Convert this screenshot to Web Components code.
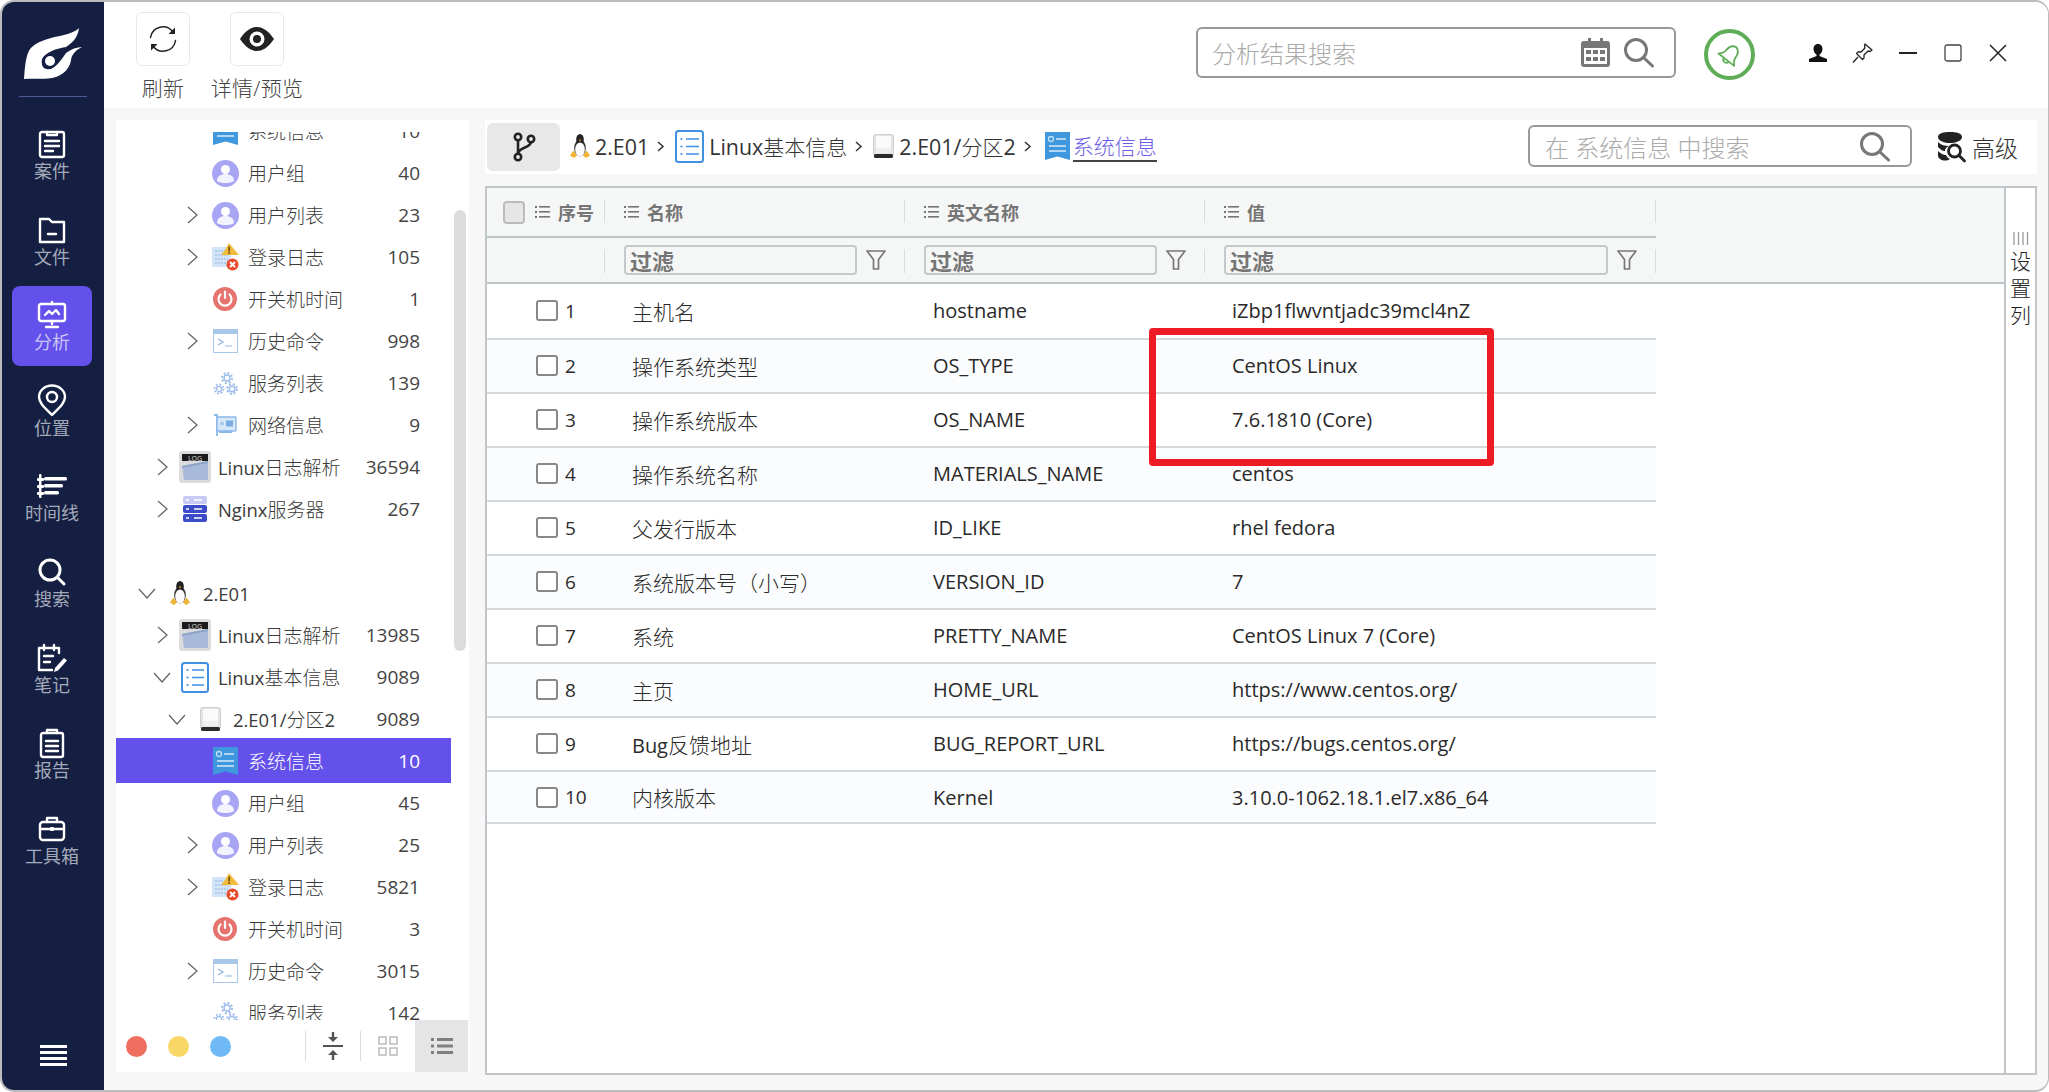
<!DOCTYPE html>
<html lang="zh"><head><meta charset="utf-8"><title>分析</title>
<style>
html,body{margin:0;padding:0;background:#fff;overflow:hidden}
body{font-family:"Open Sans","Noto Sans CJK SC",sans-serif;font-weight:300;color:#333}
</style></head><body>
<app-window>
  <side-nav slot="nav">
    <nav-item icon="case">案件</nav-item>
    <nav-item icon="file">文件</nav-item>
    <nav-item icon="analysis" active>分析</nav-item>
    <nav-item icon="pin">位置</nav-item>
    <nav-item icon="timeline">时间线</nav-item>
    <nav-item icon="search">搜索</nav-item>
    <nav-item icon="note">笔记</nav-item>
    <nav-item icon="report">报告</nav-item>
    <nav-item icon="toolbox">工具箱</nav-item>
  </side-nav>
  <top-bar slot="top">
    <tool-btn icon="refresh">刷新</tool-btn>
    <tool-btn icon="eye">详情/预览</tool-btn>
  </top-bar>
  <tree-panel slot="tree">
    <tree-row level="3" icon="doc" count="10">系统信息</tree-row>
    <tree-row level="3" icon="user" count="40">用户组</tree-row>
    <tree-row level="3" icon="user" chev="right" count="23">用户列表</tree-row>
    <tree-row level="3" icon="log" chev="right" count="105">登录日志</tree-row>
    <tree-row level="3" icon="power" count="1">开关机时间</tree-row>
    <tree-row level="3" icon="term" chev="right" count="998">历史命令</tree-row>
    <tree-row level="3" icon="gear" count="139">服务列表</tree-row>
    <tree-row level="3" icon="net" chev="right" count="9">网络信息</tree-row>
    <tree-row level="1" icon="logfile" chev="right" count="36594"><la-t>Linux</la-t>日志解析</tree-row>
    <tree-row level="1" icon="nginx" chev="right" count="267"><la-t>Nginx</la-t>服务器</tree-row>
    <tree-row level="0" blank></tree-row>
    <tree-row level="0" icon="tux" chev="down"><la-t>2.E01</la-t></tree-row>
    <tree-row level="1" icon="logfile" chev="right" count="13985"><la-t>Linux</la-t>日志解析</tree-row>
    <tree-row level="1" icon="list" chev="down" count="9089"><la-t>Linux</la-t>基本信息</tree-row>
    <tree-row level="2" icon="disk" chev="down" count="9089"><la-t>2.E01/</la-t>分区<la-t>2</la-t></tree-row>
    <tree-row level="3" icon="doc" count="10" selected>系统信息</tree-row>
    <tree-row level="3" icon="user" count="45">用户组</tree-row>
    <tree-row level="3" icon="user" chev="right" count="25">用户列表</tree-row>
    <tree-row level="3" icon="log" chev="right" count="5821">登录日志</tree-row>
    <tree-row level="3" icon="power" count="3">开关机时间</tree-row>
    <tree-row level="3" icon="term" chev="right" count="3015">历史命令</tree-row>
    <tree-row level="3" icon="gear" count="142">服务列表</tree-row>
  </tree-panel>
  <crumb-bar slot="crumbs">
    <crumb-item icon="tux" after="11"><la-t>2.E01</la-t></crumb-item>
    <crumb-item icon="listbig" after="11"><la-t>Linux</la-t>基本信息</crumb-item>
    <crumb-item icon="disk" after="14"><la-t>2.E01/</la-t>分区<la-t>2</la-t></crumb-item>
    <crumb-item icon="doc" current>系统信息</crumb-item>
  </crumb-bar>
  <data-grid slot="grid">
    <grid-row n="1" name="主机名" en="hostname" val="iZbp1flwvntjadc39mcl4nZ"></grid-row>
    <grid-row n="2" name="操作系统类型" en="OS_TYPE" val="CentOS Linux"></grid-row>
    <grid-row n="3" name="操作系统版本" en="OS_NAME" val="7.6.1810 (Core)"></grid-row>
    <grid-row n="4" name="操作系统名称" en="MATERIALS_NAME" val="centos"></grid-row>
    <grid-row n="5" name="父发行版本" en="ID_LIKE" val="rhel fedora"></grid-row>
    <grid-row n="6" name="系统版本号（小写）" en="VERSION_ID" val="7"></grid-row>
    <grid-row n="7" name="系统" en="PRETTY_NAME" val="CentOS Linux 7 (Core)"></grid-row>
    <grid-row n="8" name="主页" en="HOME_URL" val="https://www.centos.org/"></grid-row>
    <grid-row n="9" name="Bug反馈地址" en="BUG_REPORT_URL" val="https://bugs.centos.org/"></grid-row>
    <grid-row n="10" name="内核版本" en="Kernel" val="3.10.0-1062.18.1.el7.x86_64"></grid-row>
  </data-grid>
</app-window>
<script>
const W='fill="none" stroke="#fff" stroke-width="2.4" stroke-linecap="round" stroke-linejoin="round"';
const ICONS={
 logo:[58,51,'<path fill="#fff" fill-rule="evenodd" d="M0 51C1 37 2 27 6 21C12 14 24 10 36 8C44 6 51 4 55 0C54 8 50 14 42 19C31 21 22 24 18 31C17 37 19 41 23 41C29 43 36 34 42 25C47 21 53 19 58 19C52 22 48 26 47 32C46 40 40 46 32 49C22 52 10 50 0 51Z"/><circle cx="26" cy="33" r="5" fill="#fff"/>'],
 case:[28,30,`<g ${W}><rect x="2" y="3" width="24" height="25" rx="2"/><path d="M9 3v3h10V3M7 12h14M7 17h14M7 22h8"/></g>`],
 file:[28,28,`<g ${W}><path d="M2 3h9l3 3h12v20H2z"/><path d="M10 18h8"/></g>`],
 analysis:[30,28,`<g ${W}><rect x="2" y="3" width="26" height="17" rx="2"/><path d="M8 14l4-4 3 3 4-4 3 4M15 20v3M9 26h12M15 1v2"/></g>`],
 pin:[30,32,`<g ${W}><path d="M15 30C8 23 2 18 2 12A13 11.500 0 0 1 28 12C28 18 22 23 15 30Z"/><circle cx="15" cy="12" r="5"/></g>`],
 timeline:[30,24,'<g fill="#fff"><rect x="2" y="0" width="2.500" height="24" rx="1"/><rect x="0" y="4" width="7" height="3" rx="1"/><rect x="0" y="11" width="7" height="3" rx="1"/><rect x="0" y="18" width="7" height="3" rx="1"/><rect x="7" y="3" width="23" height="3.500" rx="1.500"/><rect x="7" y="10" width="19" height="3.500" rx="1.500"/><rect x="7" y="17" width="15" height="3.500" rx="1.500"/></g>'],
 search:[28,28,`<g fill="none" stroke="#fff" stroke-width="3" stroke-linecap="round"><circle cx="12" cy="12" r="10"/><path d="M19.500 19.500L26 26"/></g>`],
 note:[30,28,`<g ${W}><path d="M22 9V4H2v22h13M7 1v5M17 1v5M7 12h9M7 18h6"/></g><path fill="#fff" d="M18 24l9-10 3 2.500-9 10-4 1.500z"/>`],
 report:[26,30,`<g ${W}><rect x="2" y="5" width="22" height="24" rx="2"/><path d="M8 5V2h10v3M7 13h12M7 18h12M7 23h12"/></g>`],
 toolbox:[28,26,`<g ${W}><rect x="2" y="6" width="24" height="18" rx="3"/><path d="M9 6V2h10v4M2 13h24"/></g><rect x="12" y="11" width="4" height="4" rx="1" fill="#fff"/>`],
 menu:[27,21,'<g fill="#fff"><rect width="27" height="3"/><rect y="6" width="27" height="3"/><rect y="12" width="27" height="3"/><rect y="18" width="27" height="3"/></g>'],
 refresh:[28,28,'<g fill="none" stroke="#222" stroke-width="1.500" stroke-linecap="round"><path d="M1.500 12.500A12.500 12.500 0 0 1 24 7M26.500 15.500A12.500 12.500 0 0 1 4 21"/></g><path fill="#222" d="M26 2.500v6.500h-6.500zM2 25.500v-6.500h6.500z"/>'],
 eye:[34,24,'<path fill="#222" fill-rule="evenodd" d="M0 12C6 3 12 0 17 0S28 3 34 12C28 21 22 24 17 24S6 21 0 12ZM17 4.500A7.500 7.500 0 1 0 17 19.500A7.500 7.500 0 1 0 17 4.500Z"/><circle cx="17" cy="12" r="4" fill="#222"/>'],
 calendar:[29,29,'<path fill="#777" fill-rule="evenodd" d="M3 3h4V0h3v3h9V0h3v3h4a3 3 0 0 1 3 3v20a3 3 0 0 1-3 3H3a3 3 0 0 1-3-3V6a3 3 0 0 1 3-3ZM3 10v16h23V10Z"/><g fill="#777"><rect x="5" y="12" width="5" height="4"/><rect x="12" y="12" width="5" height="4"/><rect x="19" y="12" width="5" height="4"/><rect x="5" y="19" width="5" height="4"/><rect x="12" y="19" width="5" height="4"/><rect x="19" y="19" width="5" height="4"/></g>'],
 mag:[30,29,'<g fill="none" stroke="#777" stroke-width="3" stroke-linecap="round"><circle cx="12" cy="12" r="10.500"/><path d="M20 20l8.500 8"/></g>'],
 bell:[26,24,'<g transform="rotate(38 13 12)"><path fill="none" stroke="#5fad56" stroke-width="1.800" stroke-linejoin="round" d="M13 2C8 3 7 7 7 11C7 14 5 16 3 18H23C21 16 19 14 19 11C19 7 18 3 13 2ZM10 18C10 22 16 22 16 18"/></g>'],
 person:[18,18,'<path fill="#111" d="M9 0C12 0 13.500 2.500 13.500 5S12 10 10.500 10.500V12L18 15V18H0V15L7.500 12V10.500C6 10 4.500 7.500 4.500 5S6 0 9 0Z"/>'],
 thumb:[21,20,'<g fill="#fff" stroke="#222" stroke-width="1.300" stroke-linejoin="round"><path d="M13 1l7 6-2 1.500-2-.5-4 4 0 3-1.500 1.500-6-6L6 9l3 0 4-4-.5-2z"/></g><path stroke="#222" stroke-width="1.300" d="M6 14l-5 5.500"/>'],
 min:[18,18,'<rect y="8" width="18" height="2" fill="#222"/>'],
 max:[18,18,'<rect x="1" y="1" width="16" height="16" rx="2" fill="none" stroke="#444" stroke-width="1.300"/>'],
 close:[18,18,'<path d="M1 1l16 16M17 1L1 17" stroke="#222" stroke-width="1.500"/>'],
 branch:[22,30,'<g fill="none" stroke="#222" stroke-width="2.600"><circle cx="5" cy="5" r="3.200"/><circle cx="5" cy="25" r="3.200"/><circle cx="18" cy="7" r="3.200"/><path d="M5 8v14M18 10c0 6-13 5-13 12"/></g>'],
 adv:[28,30,'<path fill="#222" d="M0 5C0 1 6 0 12 0S24 1 24 5C24 9 17 11 12 11S0 9 0 5ZM0 10C3 13 7 14 11 14 8 15 7 17 7 19 4 19 2 17 0 15ZM0 19C2 21 5 23 8 23 9 25 10 26 12 27 9 29 5 29 2 27 0 26 0 24 0 23Z"/><g fill="none" stroke="#222" stroke-width="2.800" stroke-linecap="round"><circle cx="16.500" cy="19" r="6"/><path d="M21 23.500l5.500 5.500"/></g>'],
 doc:[25,28,'<path fill="#3f97dd" d="M0 0H25V28L12.500 24.500 0 28Z"/><circle cx="6" cy="7" r="2.500" fill="none" stroke="#bfe0f7" stroke-width="1.300"/><path stroke="#d9edfa" stroke-width="1.600" d="M11 7H21M4 14H21M4 19H21"/>'],
 user:[27,27,'<circle cx="13.500" cy="13.500" r="13.500" fill="#a7a5f4"/><circle cx="13.500" cy="9.500" r="4.500" fill="#fff"/><path fill="#f3f2ff" d="M5 21c0-5 4-7 8.500-7s8.500 2 8.500 7c-2 1.500-5 2-8.500 2S7 22.500 5 21Z"/>'],
 log:[28,28,'<rect x="1" y="4" width="19" height="20" fill="#d4e5f9"/><g stroke="#8fb3e0" stroke-width="1.200" stroke-dasharray="2 1"><path d="M4 8H17M4 12H17M4 16H17M4 20H17"/></g><path fill="#f3bb3b" d="M18 0L28 12H10L14 7Z"/><rect x="17.300" y="3.500" width="1.800" height="5" fill="#7a5510"/><rect x="17.300" y="9.400" width="1.800" height="1.600" fill="#7a5510"/><circle cx="21.500" cy="21.500" r="6" fill="#ea4a2c"/><path d="M19 19l5 5M24 19l-5 5" stroke="#fff" stroke-width="1.800"/>'],
 power:[24,24,'<circle cx="12" cy="12" r="12" fill="#e6736d"/><g fill="none" stroke="#fff" stroke-width="2.200" stroke-linecap="round"><path d="M7.500 7.500A6.500 6.500 0 1 0 16.500 7.500"/><path d="M12 4.500V11"/></g>'],
 term:[25,24,'<rect x=".5" y=".5" width="24" height="23" fill="#fff" stroke="#a9c7ea"/><rect x="1" y="1" width="23" height="4" fill="#a9c7ea"/><path d="M5 10l5 3-5 3M12 17h7" fill="none" stroke="#8fb3e0" stroke-width="1.200"/>'],
 gear:[25,25,'<g fill="none" stroke="#9dbcea"><circle cx="14" cy="7" r="3" stroke-width="1.400"/><circle cx="14" cy="7" r="5" stroke-width="2" stroke-dasharray="2 1.900"/><circle cx="6" cy="18" r="2.600" stroke-width="1.200"/><circle cx="6" cy="18" r="4.500" stroke-width="1.800" stroke-dasharray="1.800 1.700"/><circle cx="19" cy="18" r="2.800" stroke-width="1.400"/><circle cx="19" cy="18" r="4.800" stroke-width="2" stroke-dasharray="2 1.800"/></g>'],
 net:[24,23,'<path fill="none" stroke="#8ab8e8" stroke-width="1.800" d="M1 1H4V22"/><rect x="4" y="3" width="19" height="14" rx="1" fill="#d5e7f8" stroke="#8ab8e8" stroke-width="1.400"/><rect x="13" y="6.500" width="7" height="6" fill="#78ace0"/><rect x="7" y="8" width="4" height="3" fill="#a5caee"/><rect x="6" y="17" width="13" height="2" fill="#8ab8e8"/>'],
 logfile:[32,32,'<rect width="32" height="32" rx="3" fill="#dcdcdc"/><rect x="3" y="3" width="26" height="7" fill="#1b1b1b"/><text x="16" y="9.500" font-family="Open Sans" font-size="7" font-weight="400" fill="#ddd" text-anchor="middle">LOG</text><path fill="#a7bad9" d="M3 15L29 10V29H5Z"/><path fill="#8ea3c8" d="M3 15L29 10V12L3 17Z"/>'],
 nginx:[24,26,'<rect width="24" height="8" x="0" y="0" rx="2" fill="#c6caf4"/><rect width="24" height="8" y="9" rx="2" fill="#3b4cc9"/><rect width="24" height="8" y="18" rx="2" fill="#3b4cc9"/><path stroke="#fff" stroke-width="1.600" d="M3 4H6M11 4H19M3 13H6M11 13H19M3 22H6M11 22H19"/>'],
 list:[28,31,'<rect x="1" y="1" width="26" height="29" rx="2.500" fill="#fff" stroke="#3f8fe2" stroke-width="2"/><path stroke="#3f8fe2" stroke-width="1.500" d="M11 8H23M11 15.500H23M11 23H23"/><g fill="#3f8fe2"><circle cx="6.500" cy="8" r="1.100"/><circle cx="6.500" cy="15.500" r="1.100"/><circle cx="6.500" cy="23" r="1.100"/></g>'],
 listbig:[29,33,'<rect x="1" y="1" width="27" height="31" rx="2.500" fill="#fff" stroke="#3f8fe2" stroke-width="2"/><path stroke="#3f8fe2" stroke-width="1.500" d="M11 9H24M11 16.500H24M11 24H24"/><g fill="#3f8fe2"><circle cx="6.500" cy="9" r="1.100"/><circle cx="6.500" cy="16.500" r="1.100"/><circle cx="6.500" cy="24" r="1.100"/></g>'],
 disk:[21,24,'<path fill="#e3e3e3" stroke="#cfcfcf" d="M3 .5H18Q20.500 .5 20.500 3V21H.5V3Q.5 .5 3 .5Z"/><path fill="#fafafa" d="M3 2H18V19H3Z"/><path fill="#efefef" d="M3 14H18V19H3Z"/><rect x="1" y="20" width="19" height="4" rx="1.500" fill="#2a2a2a"/>'],
 tux:[20,24,'<ellipse cx="10" cy="14" rx="5.800" ry="8.500" fill="#333"/><ellipse cx="10" cy="5.500" rx="3.800" ry="5.500" fill="#222"/><ellipse cx="10" cy="15.500" rx="4.800" ry="7" fill="#fbfbfb"/><path fill="#eeb432" d="M8.800 5.500h2.400L10 7.500zM0 21.500l3.500-5 3.500 5-3 2.500zM20 21.500l-3.500-5-3.500 5 3 2.500z"/>'],
 chevR:[11,18,'<path d="M1 1l9 8-9 8" fill="none" stroke="#666" stroke-width="1.300"/>'],
 chevD:[18,11,'<path d="M1 1l8 9 8-9" fill="none" stroke="#666" stroke-width="1.300"/>'],
 sep:[7,11,'<path d="M1 1l5 4.500-5 4.500" fill="none" stroke="#333" stroke-width="1.500"/>'],
 collapse:[20,28,'<path fill="#555" d="M8.800 0h2.400v5H15l-5 5-5-5h3.800zM0 13h20v2H0zM10 18l5 5h-3.800v5H8.800v-5H5z"/>'],
 grid:[20,20,'<g fill="none" stroke="#bbb" stroke-width="1.500"><rect x="1" y="1" width="7" height="7"/><rect x="12" y="1" width="7" height="7"/><rect x="1" y="12" width="7" height="7"/><rect x="12" y="12" width="7" height="7"/></g>'],
 lines:[22,16,'<g fill="#808080"><rect width="3" height="3"/><rect y="6.500" width="3" height="3"/><rect y="13" width="3" height="3"/><rect x="6" width="16" height="3"/><rect x="6" y="6.500" width="16" height="3"/><rect x="6" y="13" width="16" height="3"/></g>'],
 hlist:[15,12,'<g fill="#757575"><rect y="0" width="2" height="2"/><rect y="5" width="2" height="2"/><rect y="10" width="2" height="2"/><rect x="4" y="0" width="11" height="1.600"/><rect x="4" y="5" width="11" height="1.600"/><rect x="4" y="10" width="11" height="1.600"/></g>'],
 funnel:[20,20,'<path fill="none" stroke="#777" stroke-width="1.700" stroke-linejoin="round" d="M1 1H19L12.500 9.500V19H7.500V9.500Z"/>'],
 gripper:[16,13,'<path stroke="#999" stroke-width="1.300" d="M1 0V13M5.500 0V13M10 0V13M14.500 0V13"/>']
};
function def(name,css,html,init){
  customElements.define(name,class extends HTMLElement{
    connectedCallback(){
      if(this.shadowRoot)return;
      const r=this.attachShadow({mode:'open'});
      const h=typeof html==='function'?html(this):html;
      r.innerHTML=`<style>${css}</style>${h}`;
      if(init)init(this,r);
    }
  });
}
def('ui-icon',':host{display:inline-flex;line-height:0;flex:none}svg{display:block;overflow:visible}',
 el=>{const i=ICONS[el.getAttribute('name')]||[1,1,''];return `<svg width="${i[0]}" height="${i[1]}" viewBox="0 0 ${i[0]} ${i[1]}">${i[2]}</svg>`});
def('la-t',':host{display:inline;font-size:var(--la,.95em);font-family:"Open Sans",sans-serif;font-weight:400}','<slot></slot>');

def('app-window',`
 :host{display:flex;box-sizing:border-box;width:2049px;height:1092px;border:solid #bcbcbc;border-width:2px 1px 2px 2px;border-radius:14px;overflow:hidden;background:#f7f7f7}
 .main{flex:1;display:flex;flex-direction:column;min-width:0}
 .body{flex:1;display:flex;padding:12px 11px 0 12px;gap:16px;min-height:0}
 .right{flex:1;display:flex;flex-direction:column;gap:12px;min-width:0}
`,`<slot name="nav"></slot><div class="main"><slot name="top"></slot><div class="body"><slot name="tree"></slot><div class="right"><slot name="crumbs"></slot><slot name="grid"></slot></div></div></div>`);

def('side-nav',`
 :host{display:flex;flex-direction:column;align-items:center;width:102px;flex:none;background:#141f42}
 .logo{padding-top:26px;display:flex}
 hr{width:68px;height:1px;border:0;background:#4b5a94;margin:17px 0 18px}
 .items{display:flex;flex-direction:column;gap:5.6px;margin-right:2px}
 .menu{margin-top:auto;padding-bottom:24px;display:flex}
`,`<div class="logo"><ui-icon name="logo"></ui-icon></div><hr><div class="items"><slot></slot></div><div class="menu"><ui-icon name="menu"></ui-icon></div>`);

def('nav-item',`
 :host{display:flex;flex-direction:column;align-items:center;width:80px;height:80px;box-sizing:border-box;padding-top:14px;border-radius:8px;font-size:18px;line-height:25px;color:#a4a9b9;font-weight:400}
 :host([active]){background:#6450ea;color:#c9c5f5}
 .ic{height:30px;display:flex;align-items:center;justify-content:center}
`,el=>`<div class="ic"><ui-icon name="${el.getAttribute('icon')}"></ui-icon></div><slot></slot>`);

def('top-bar',`
 :host{display:flex;height:106px;flex:none;background:#fff;padding-left:32px;box-sizing:border-box;padding-right:28px}
 .tools{display:flex;gap:40px;padding-top:10px}
 .end{margin-left:auto;display:flex;align-items:flex-start}
 .search{width:480px;height:51px;margin-top:25px;box-sizing:border-box;border:2px solid #999;border-radius:6px;display:flex;align-items:center;padding:0 20px 0 14px;font-size:24px;color:#aaa;font-weight:300}
 .search span{flex:1}
 .search .gap{width:14px}
 .bellc{width:51px;height:51px;box-sizing:border-box;margin:27px 40px 0 28px;border:4px solid #5fad56;border-radius:50%;display:flex;align-items:center;justify-content:center}
 .win{display:flex;margin-top:41px}
 .win div{width:45px;height:20px;display:flex;align-items:center;justify-content:center}
`,`<div class="tools"><slot></slot></div><div class="end">
 <div class="search"><span>分析结果搜索</span><ui-icon name="calendar"></ui-icon><div class="gap"></div><ui-icon name="mag"></ui-icon></div>
 <div class="bellc"><ui-icon name="bell"></ui-icon></div>
 <div class="win"><div><ui-icon name="person"></ui-icon></div><div><ui-icon name="thumb"></ui-icon></div><div><ui-icon name="min"></ui-icon></div><div><ui-icon name="max"></ui-icon></div><div><ui-icon name="close"></ui-icon></div></div>
</div>`);

def('tool-btn',`
 :host{display:flex;flex-direction:column;align-items:center;width:54px}
 .b{width:54px;height:54px;box-sizing:border-box;border:1px solid #e8e8e8;border-radius:6px;display:flex;align-items:center;justify-content:center}
 .t{white-space:nowrap;font-size:21px;line-height:28px;margin-top:8px;color:#444;letter-spacing:.25px}
`,el=>`<div class="b"><ui-icon name="${el.getAttribute('icon')}"></ui-icon></div><div class="t"><slot></slot></div>`);

def('tree-panel',`
 :host{display:flex;flex-direction:column;position:relative;width:353px;height:952px;flex:none;background:#fff}
 .view{height:888px;margin-top:12px;overflow:hidden;flex:none}
 .inner{margin-top:-22px;width:335px}
 .scroll{position:absolute;left:338px;top:90px;width:12px;height:441px;border-radius:6px;background:#dcdcdc}
 .foot{flex:1;display:flex;align-items:stretch;padding-right:1px}
 .dots{flex:1;display:flex;align-items:center;gap:21px;padding-left:10px}
 .dots i{width:21px;height:21px;border-radius:50%}
 .btn{display:flex;align-items:center;justify-content:center;width:55px}
 .btn.sep{position:relative;border-left:1px solid #ddd;margin:11px 0;box-sizing:border-box}
 .btn.on{background:#e5e5e5;width:53px}
`,`<div class="view"><div class="inner"><slot></slot></div></div><div class="scroll"></div>
 <div class="foot"><div class="dots"><i style="background:#ee6e5f"></i><i style="background:#f9d766"></i><i style="background:#6fbaf6"></i></div>
 <div class="btn sep"><ui-icon name="collapse"></ui-icon></div><div class="btn sep"><ui-icon name="grid"></ui-icon></div><div class="btn on"><ui-icon name="lines"></ui-icon></div></div>`);

def('tree-row',`
 :host{display:flex;align-items:center;height:42px;font-size:19px;color:#3a3a3a;white-space:nowrap;--la:.97em}
 :host([selected]){background:#6450ea;color:#fff;box-shadow:0 -2px 0 #6450ea,0 1px 0 #6450ea}
 .c{width:24px;display:flex;justify-content:center;flex:none}
 .i{width:36px;margin:0 5px 0 3px;display:flex;justify-content:center;flex:none}
 .n{margin-left:auto;padding-right:31px;font-size:19px;font-family:"Open Sans",sans-serif;font-weight:400;color:#444}
 :host([selected]) .n{color:#fff}
`,el=>{
  if(el.hasAttribute('blank'))return '';
  const lv=+el.getAttribute('level'),ch=el.getAttribute('chev');
  const chev=ch?`<ui-icon name="${ch==='right'?'chevR':'chevD'}"></ui-icon>`:'';
  return `<div style="width:${19+15*lv}px;flex:none"></div><div class="c">${chev}</div><div class="i"><ui-icon name="${el.getAttribute('icon')}"></ui-icon></div><slot></slot><div class="n">${el.getAttribute('count')||''}</div>`;
});

def('crumb-bar',`
 :host{display:flex;align-items:center;height:54px;flex:none;background:#fff;padding-left:2px;box-sizing:border-box;padding-right:19px}
 .b{width:73px;height:48px;background:#e8e8e8;border-radius:6px;display:flex;align-items:center;justify-content:center;margin-right:10px}
 .s{margin-left:auto;width:384px;height:42px;margin-top:-2px;box-sizing:border-box;border:2px solid #999;border-radius:6px;display:flex;align-items:center;padding:0 20px 0 15px;font-size:24px;color:#aaa}
 .s span{flex:1}
 .a{display:flex;align-items:center;margin-left:26px;font-size:23px;color:#333;gap:6px}
 .cr{display:flex;align-items:center;margin-bottom:2px}
`,`<div class="b"><ui-icon name="branch"></ui-icon></div><div class="cr"><slot></slot></div><div class="s"><span>在 系统信息 中搜索</span><ui-icon name="mag"></ui-icon></div><div class="a"><ui-icon name="adv"></ui-icon>高级</div>`);

def('crumb-item',`
 :host{display:inline-flex;align-items:center;font-size:21px;color:#333;white-space:nowrap;--la:1.02em}
 .ic{margin-right:5px;display:flex}
 :host([current]) .ic{margin-right:3px}
 .sep{margin-left:8px;display:flex}
 .cur{color:#6c5ce7;border-bottom:2px solid #444;line-height:27px;margin-top:3px}
`,el=>{
  const cur=el.hasAttribute('current');
  const after=el.getAttribute('after')||0;
  return `<div class="ic"><ui-icon name="${el.getAttribute('icon')}"></ui-icon></div>${cur?'<span class="cur"><slot></slot></span>':`<slot></slot><span class="sep" style="margin-right:${after}px"><ui-icon name="sep"></ui-icon></span>`}`;
});

const COLS='118px 300px 300px 451px';
def('data-grid',`
 :host{display:flex;position:relative;height:889px;flex:none;box-sizing:border-box;border:2px solid #bfc5c9;background:#fff}
 .main{width:1517px;flex:none;border-right:2px solid #bfc5c9;display:flex;flex-direction:column}
 .head{background:#f5f7f7;border-bottom:2px solid #bfc5c9;height:96px;flex:none;box-sizing:border-box}
 .r{display:grid;grid-template-columns:${COLS};width:1169px}
 .r1{height:50px;border-bottom:2px solid #bfc5c9;box-sizing:border-box}
 .r2{height:44px}
 .h{position:relative;display:flex;align-items:center;padding-left:19px;font-size:18px;font-weight:700;color:#757575;gap:8px;box-sizing:border-box}
 .h::after{content:"";position:absolute;right:0;top:12px;bottom:13px;width:1px;background:#d8dcde}
 .r2 .h::after{top:11px;bottom:9px}
 .h.first{padding-left:16px}
 .cb{width:22px;height:23px;box-sizing:border-box;border:2px solid #bbb;border-radius:4px;background:#e6e6e6;margin-right:2px}
 .f{height:30px;flex:1;box-sizing:border-box;border:2px solid #c5c9cb;border-radius:4px;font-size:22px;line-height:28px;padding-left:4px;color:#757575;font-weight:700}
 .r2 .h{gap:9px;padding-right:19px}
 .body{flex:1;padding-top:2px}
 .side{flex:1;display:flex;flex-direction:column;align-items:center;padding-top:44px;font-size:21px;line-height:27px;color:#222}
 .side ui-icon{margin-bottom:3px}
 .side span{display:block}
 .mark{position:absolute;left:662px;top:140px;width:345px;height:138px;box-sizing:border-box;border:7.500px solid #ed1c24;border-radius:4px;pointer-events:none}
`,`<div class="main"><div class="head">
   <div class="r r1">
     <div class="h first"><div class="cb"></div><ui-icon name="hlist"></ui-icon>序号</div>
     <div class="h"><ui-icon name="hlist"></ui-icon>名称</div>
     <div class="h"><ui-icon name="hlist"></ui-icon>英文名称</div>
     <div class="h"><ui-icon name="hlist"></ui-icon>值</div>
   </div>
   <div class="r r2">
     <div class="h"></div>
     <div class="h"><div class="f">过滤</div><ui-icon name="funnel"></ui-icon></div>
     <div class="h"><div class="f">过滤</div><ui-icon name="funnel"></ui-icon></div>
     <div class="h"><div class="f">过滤</div><ui-icon name="funnel"></ui-icon></div>
   </div></div>
   <div class="body"><slot></slot></div></div>
   <div class="side"><ui-icon name="gripper"></ui-icon><span>设</span><span>置</span><span>列</span></div>
   <div class="mark"></div>`);

def('grid-row',`
 :host{display:grid;grid-template-columns:${COLS};width:1169px;height:54px;box-sizing:border-box;border-bottom:2px solid #d5d8dc;padding-bottom:1px;align-items:center;font-size:21px;color:#2a2a2a;white-space:nowrap}
 :host(:first-child){padding-bottom:3px}
 :host(:last-child){height:52px;padding-bottom:0}
 :host(.alt){background:#fbfcfe}
 .n{display:flex;align-items:center;padding-left:49px;font-size:19px;font-family:"Open Sans",sans-serif;font-weight:400}
 .b{width:22px;height:21px;box-sizing:border-box;border:2px solid #888;border-radius:3px;background:#fff;margin-right:7px;flex:none}
 .t{padding-left:27px}
 .l{padding-left:28px;font-size:20px;font-family:"Open Sans",sans-serif;font-weight:400}
 .v{padding-left:27px}
`,el=>{
  const a=k=>el.getAttribute(k);
  if(+a('n')%2===0)el.classList.add('alt');
  const nm=a('name').replace(/^(Bug)/,'<la-t>$1</la-t>');
  return `<div class="n"><div class="b"></div>${a('n')}</div><div class="t">${nm}</div><div class="l">${a('en')}</div><div class="l v">${a('val')}</div>`;
});
</script>
</body></html>
